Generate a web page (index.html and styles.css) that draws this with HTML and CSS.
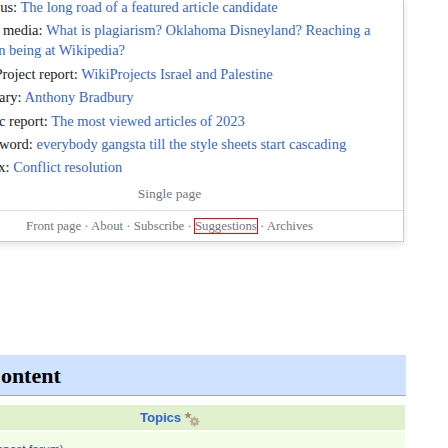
FILE: index.html
```html
<!DOCTYPE html>
<html>
<head>
<meta charset="utf-8">
<link rel="stylesheet" href="styles.css">
</head>
<body>
<div class="page">
  <div class="panel">
    <ul class="stories">
      <li class="story"><span class="label">In focus:</span> <a href="#" class="story-link">The long road of a featured article candidate</a></li>
      <li class="story"><span class="label">In the media:</span> <a href="#" class="story-link">What is plagiarism? Oklahoma Disneyland? Reaching a human being at Wikipedia?</a></li>
      <li class="story"><span class="label">WikiProject report:</span> <a href="#" class="story-link">WikiProjects Israel and Palestine</a></li>
      <li class="story"><span class="label">Obituary:</span> <a href="#" class="story-link">Anthony Bradbury</a></li>
      <li class="story"><span class="label">Traffic report:</span> <a href="#" class="story-link">The most viewed articles of 2023</a></li>
      <li class="story"><span class="label">Crossword:</span> <a href="#" class="story-link">everybody gangsta till the style sheets start cascading</a></li>
      <li class="story"><span class="label">Comix:</span> <a href="#" class="story-link">Conflict resolution</a></li>
    </ul>
    <div class="single"><a href="#" class="single-link">Single page</a></div>
    <div class="footer">
      <a href="#" class="foot-link">Front page</a> · <a href="#" class="foot-link">About</a> · <a href="#" class="foot-link">Subscribe</a> · <a href="#" class="foot-link focused">Suggestions</a> · <a href="#" class="foot-link">Archives</a>
    </div>
  </div>

  <div class="section">
    <h2 class="section-head">Content</h2>
    <div class="topics-bar">
      <a href="#" class="topics">Topics</a>
      <svg class="topics-icon" width="16" height="16" viewBox="0 0 16 16">
        <polygon points="4,0.5 5.1,3 7.7,3.2 5.7,4.9 6.3,7.5 4,6.1 1.7,7.5 2.3,4.9 0.3,3.2 2.9,3" fill="#a08e7a"/>
        <g fill="#b9ab9c">
          <circle cx="10.5" cy="10.5" r="3.6"/>
          <rect x="9.6" y="5.6" width="1.8" height="9.8"/>
          <rect x="5.6" y="9.6" width="9.8" height="1.8"/>
          <rect x="9.6" y="5.6" width="1.8" height="9.8" transform="rotate(45 10.5 10.5)"/>
          <rect x="9.6" y="5.6" width="1.8" height="9.8" transform="rotate(-45 10.5 10.5)"/>
        </g>
        <circle cx="10.5" cy="10.5" r="1.3" fill="#e2f0cf"/>
      </svg>
    </div>
    <div class="forum-bar">
      <a href="#" class="forum">(Signpost forum)</a>
    </div>
  </div>
</div>
</body>
</html>
```

FILE: styles.css
```css
html, body {
  margin: 0;
  padding: 0;
  background: #ffffff;
  overflow: hidden;
}

.page {
  margin-left: -65px;
  width: 471px;
}

.panel {
  width: 467px;
  border: 1px solid #c8ccd1;
  border-top: none;
  background: #ffffff;
  box-shadow: 0 3px 7px rgba(0, 0, 0, 0.10);
  font-family: "Liberation Serif", serif;
}

.stories {
  list-style: none;
  margin: -3px 0 0 0;
  padding: 0 29px 0 30px;
  font-size: 14.5px;
  line-height: 20px;
  color: #202122;
}

.story {
  display: block;
  margin: 0;
  padding: 0 0 3.4px 0;
  line-height: 20px;
}

.story-link {
  color: #3366cc;
  text-decoration: none;
}

.single {
  text-align: center;
  height: 20px;
  line-height: 20px;
  margin-top: 3px;
  padding-bottom: 6px;
  border-bottom: 1px solid #dcdcdc;
  font-size: 13.5px;
}

.single-link {
  color: #72777d;
  text-decoration: none;
}

.footer {
  text-align: center;
  height: 30px;
  line-height: 30px;
  font-size: 12.8px;
  color: #72777d;
}

.foot-link {
  color: #72777d;
  text-decoration: none;
}

.focused {
  outline: 1px solid #ff0000;
  outline-offset: 0;
}

.section {
  margin-top: 113px;
}

.section-head {
  margin: 0;
  width: 421px;
  height: 40px;
  padding: 0 0 0 50px;
  background: #cfe2ff;
  border-bottom: 1px solid #a2a9b1;
  font-family: "Liberation Serif", serif;
  font-weight: bold;
  font-size: 22px;
  line-height: 42px;
  color: #000000;
}

.topics-bar {
  margin-top: 9px;
  width: 470px;
  height: 25px;
  background: #e1f0cd;
  display: flex;
  align-items: center;
  justify-content: center;
  gap: 3px;
}

.topics {
  font-family: "Liberation Sans", Arial, sans-serif;
  font-weight: bold;
  font-size: 13px;
  color: #3366cc;
  text-decoration: none;
}

.topics-icon {
  display: block;
  margin-top: 3px;
}

.forum-bar {
  margin-top: 2px;
  width: 470px;
  height: 30px;
  background: #f1fce6;
  padding: 8px 0 0 40px;
  box-sizing: border-box;
}

.forum {
  font-family: "Liberation Sans", Arial, sans-serif;
  font-size: 12px;
  color: #3a5590;
  text-decoration: none;
}
```
